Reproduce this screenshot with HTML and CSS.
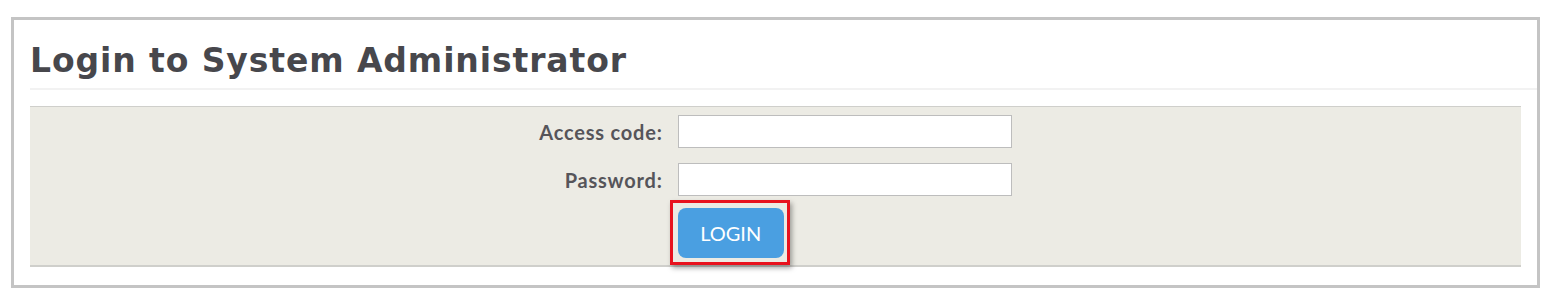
FILE: index.html
```html
<!DOCTYPE html>
<html lang="en">
<head>
    <meta charset="UTF-8">
    <title>Login to System Administrator</title>
    <link rel="stylesheet" href="styles.css">
</head>
<body>
    <div class="box">
        <div class="box-header">
            <h1>Login to System Administrator</h1>
        </div>
        <form class="login-form" onsubmit="return false">
            <label for="access-code">Access code:</label>
            <input type="text" id="access-code">
            <label for="password">Password:</label>
            <input type="password" id="password">
            <div class="login-cell">
                <span class="highlight">
                    <button type="submit">Login</button>
                </span>
            </div>
        </form>
    </div>
</body>
</html>
```

FILE: styles.css
```css
* {
    margin: 0;
    padding: 0;
    box-sizing: border-box;
}
body {
    font-family: Lato, "Open Sans", sans-serif;
    background-color: #fff;
    color: #555;
}
.box {
    margin: 17px 16px 0 11px;
    border: 3px solid #c4c4c4;
    padding: 0 16px 18px 16px;
}
.box-header {
    height: 70px;
    margin-right: -16px;
    border-bottom: 2px solid #f2f2f2;
    padding: 21px 0 0 0;
}
h1 {
    font-family: "DejaVu Sans", sans-serif;
    font-weight: 700;
    font-size: 33px;
    line-height: 40px;
    letter-spacing: 0.9px;
    color: #47474c;
}
.login-form {
    margin-top: 16px;
    background-color: #ecebe4;
    border-top: 1px solid #cfcfcb;
    border-bottom: 2px solid #cfcfcb;
    padding: 8px 0 7px;
    display: grid;
    grid-template-columns: auto auto;
    justify-content: center;
    align-items: center;
    column-gap: 15px;
    row-gap: 15px;
}
.login-form label {
    text-align: right;
    font-weight: 700;
    font-size: 20px;
    letter-spacing: 0.8px;
    color: #56555a;
}
.login-form input {
    width: 334px;
    height: 33px;
    border: 1px solid #bdbdbd;
    background-color: #fff;
    padding: 0 6px;
    font-size: 15px;
}
.login-cell {
    grid-column: 2;
    margin-top: -3px;
}
.highlight {
    position: relative;
    display: inline-block;
}
.highlight::after {
    content: "";
    position: absolute;
    top: -8px;
    left: -8px;
    right: -6px;
    bottom: -7px;
    border: 3px solid #e8121e;
    box-shadow: 2px 3px 5px rgba(0, 0, 0, 0.35);
    pointer-events: none;
}
button {
    display: block;
    width: 106px;
    height: 50px;
    border: none;
    border-radius: 8px;
    background-color: #4a9fe1;
    color: #fff;
    font-family: Lato, sans-serif;
    font-size: 20px;
    text-transform: uppercase;
    cursor: pointer;
}
```
